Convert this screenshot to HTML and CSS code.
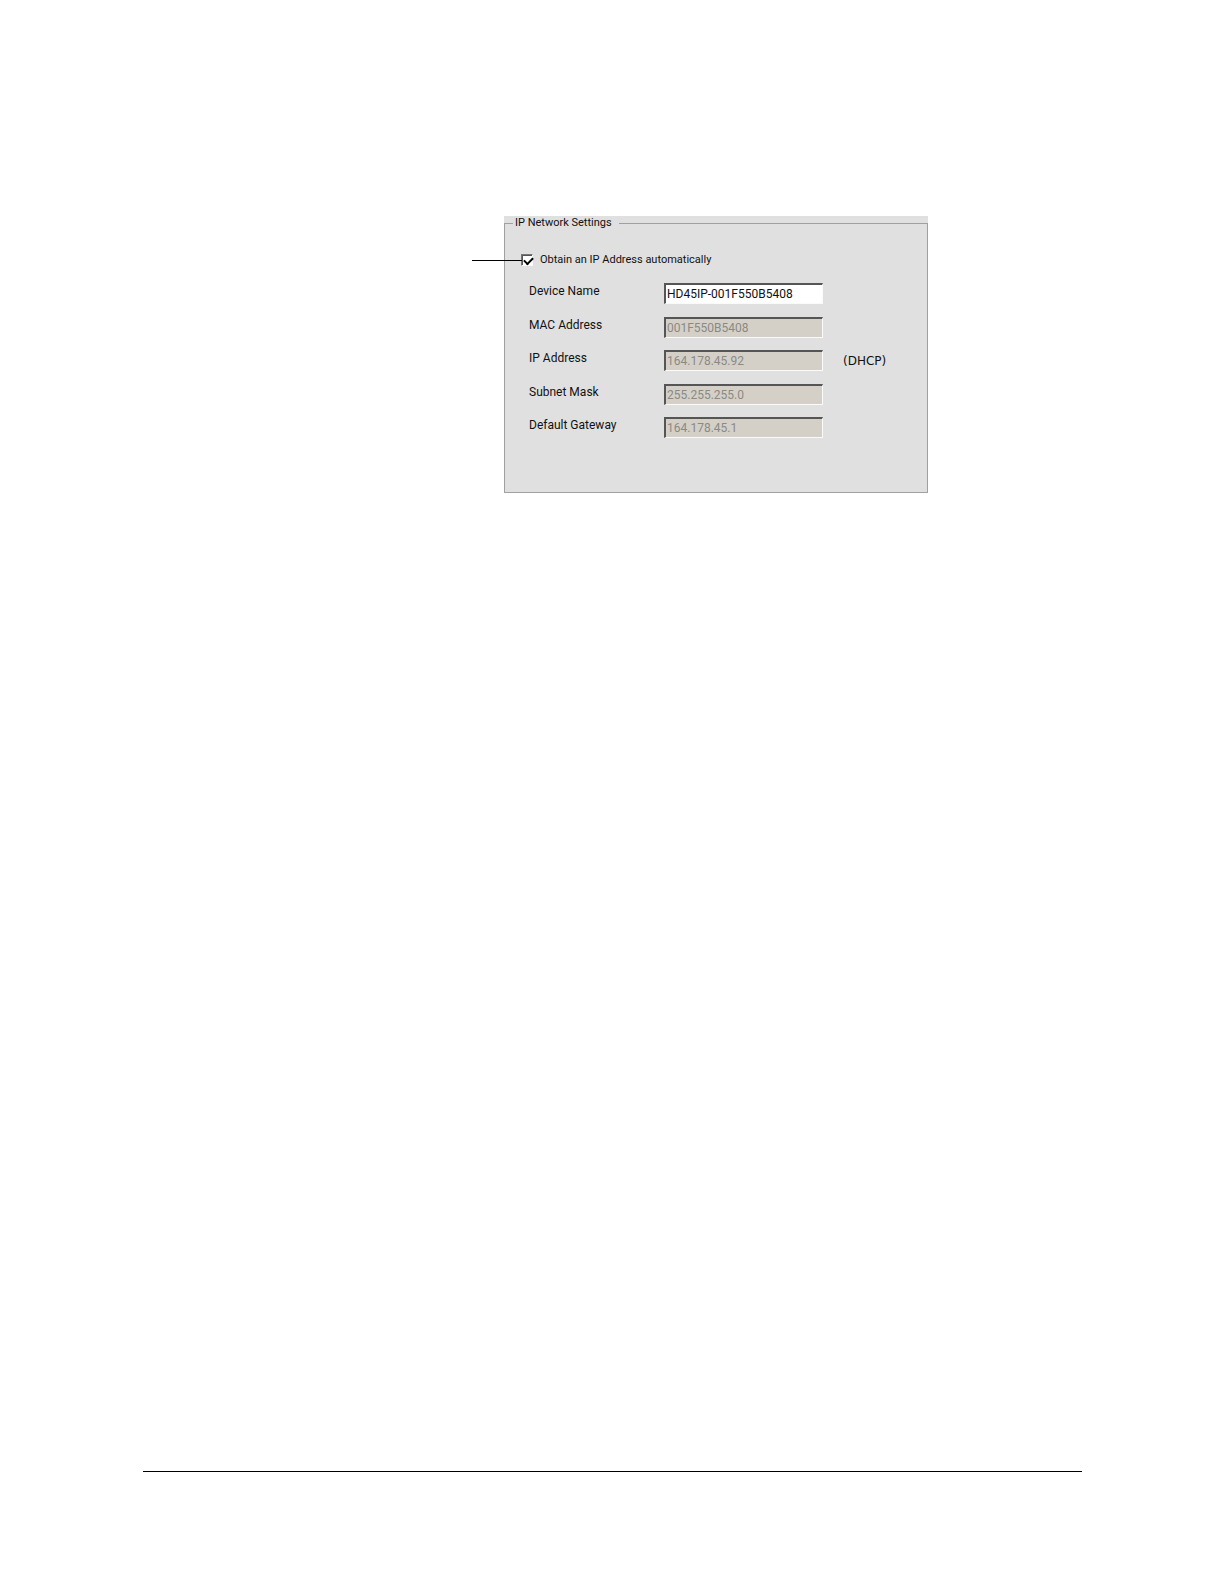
FILE: index.html
```html
<!DOCTYPE html>
<html lang="en">

<head>
  <meta charset="UTF-8" />
  <meta name="viewport" content="width=device-width, initial-scale=1.0" />
  <title>IP Network Settings</title>
  <link rel="stylesheet" href="styles.css">
</head>

<body>
  <main class="page">
    <form class="panel">
      <fieldset class="settings">
        <legend>IP Network Settings</legend>
        <div class="auto-row">
          <input type="checkbox" id="auto-ip" checked />
          <label for="auto-ip">Obtain an IP Address automatically</label>
        </div>
        <div class="fields">
          <div class="field">
            <label for="device-name">Device Name</label>
            <input type="text" id="device-name" value="HD45IP-001F550B5408" />
          </div>
          <div class="field">
            <label for="mac-address">MAC Address</label>
            <input type="text" id="mac-address" value="001F550B5408" disabled />
          </div>
          <div class="field">
            <label for="ip-address">IP Address</label>
            <input type="text" id="ip-address" value="164.178.45.92" disabled />
            <span class="source">(DHCP)</span>
          </div>
          <div class="field">
            <label for="subnet-mask">Subnet Mask</label>
            <input type="text" id="subnet-mask" value="255.255.255.0" disabled />
          </div>
          <div class="field">
            <label for="gateway">Default Gateway</label>
            <input type="text" id="gateway" value="164.178.45.1" disabled />
          </div>
        </div>
      </fieldset>
    </form>
    <hr class="footer-rule" />
  </main>
</body>

</html>
```

FILE: styles.css
```css
* {
  box-sizing: border-box;
}

body {
  margin: 0;
  background: #fff;
  color: #111;
  font-family: Roboto, 'Liberation Sans', sans-serif;
  font-size: 12px;
  line-height: 14px;
}

.page {
  display: flex;
  flex-direction: column;
  min-height: 100vh;
  padding: 216px 142px 112px 143px;
}

.panel {
  width: 100%;
  max-width: 424px;
  margin-left: 361px;
  background: #e0e0e0;
}

.settings {
  margin: 0;
  padding: 0 24px 54px 16px;
  border: 1px solid #a0a0a0;
}

.settings legend {
  margin-left: -8px;
  padding: 0 7px 0 2px;
  font-size: 11px;
}

.auto-row {
  display: flex;
  align-items: center;
  gap: 7px;
  position: relative;
  padding-top: 23px;
  font-size: 11px;
}

/* Callout line that points at the tick box */
.auto-row::before {
  content: '';
  position: absolute;
  left: -49px;
  bottom: 6px;
  width: 50px;
  height: 1px;
  background: #000;
}

input[type="checkbox"] {
  appearance: none;
  width: 12px;
  height: 12px;
  margin: 0;
  border: 1px solid;
  border-color: #777 #f8f8f8 #f8f8f8 #777;
  background: #fff;
  box-shadow: inset 1px 1px #555;
}

/* Tick */
input[type="checkbox"]:checked::before {
  content: '';
  display: block;
  width: 7px;
  height: 4px;
  margin: 2px 0 0 2px;
  border: solid #000;
  border-width: 0 0 2px 2px;
  transform: rotate(-45deg);
}

.fields {
  display: flex;
  flex-direction: column;
  justify-content: space-between;
  height: 155px;
  margin: 16px 0 0 8px;
}

.field {
  display: flex;
  align-items: center;
}

.field label {
  width: 135px;
  padding-bottom: 5px;
}

input[type="text"] {
  width: 159px;
  height: 21px;
  padding: 0 1px;
  border: 1px solid;
  border-color: #555 #fafafa #fafafa #555;
  border-width: 2px 1px 1px 2px;
  background: #fff;
  color: #111;
  font: inherit;
}

input[type="text"]:disabled {
  background: #d4d0c8;
  color: #8a8a84;
}

.source {
  margin-left: 20px;
  font-family: 'DejaVu Sans', sans-serif;
}

.footer-rule {
  width: 100%;
  height: 1px;
  margin: auto 0 0;
  border: 0;
  background: #000;
}
```
